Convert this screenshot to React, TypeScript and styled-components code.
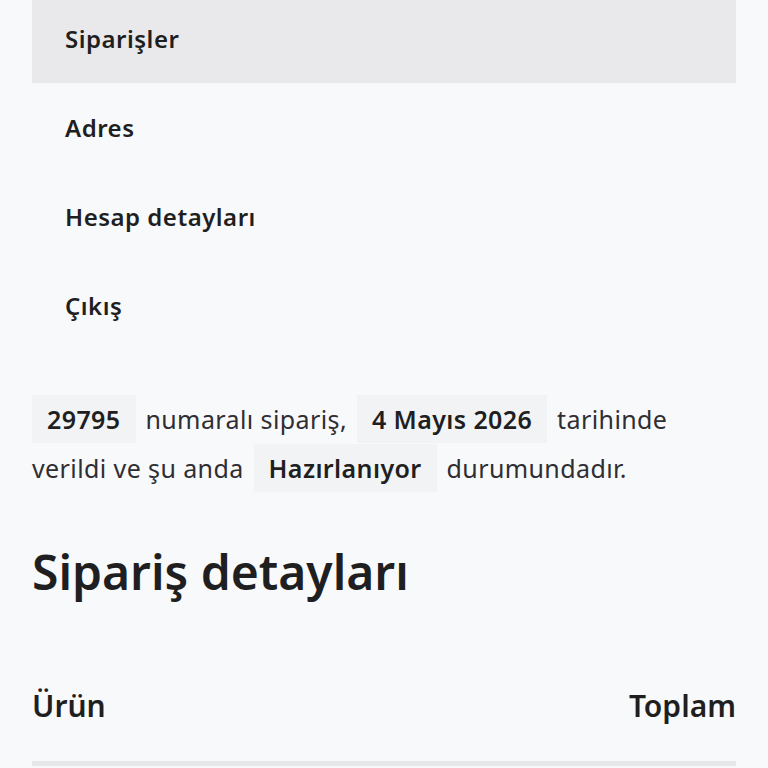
import styled, { createGlobalStyle } from 'styled-components';

const GlobalStyle = createGlobalStyle`
  * {
    box-sizing: border-box;
  }

  body {
    margin: 0;
    background-color: #f8f9fb;
    color: #1f1f22;
    font-family: 'Noto Sans', 'Lato', sans-serif;
  }
`;

const Page = styled.main`
  padding: 0 32px;
  overflow: hidden;
  height: 768px;
`;

const Nav = styled.ul`
  list-style: none;
  margin: -6px 0 0;
  padding: 0;
`;

const NavItem = styled.li<{ $active?: boolean }>`
  display: flex;
  align-items: center;
  height: 89px;
  padding-left: 33px;
  font-size: 24px;
  font-weight: 600;
  letter-spacing: 0.5px;
  color: #1f1f22;
  background-color: ${({ $active }) => ($active ? '#e9e9eb' : 'transparent')};
`;

const Summary = styled.p`
  margin: 45px 0 0;
  font-size: 25px;
  letter-spacing: 0.4px;
  line-height: 49px;
  color: #2e2e33;
`;

const Mark = styled.mark`
  display: inline-block;
  margin: 0 3px;
  padding: 0 15px;
  line-height: 48px;
  font-weight: 600;
  color: #1f1f22;
  background-color: #f2f3f5;

  &:first-child {
    margin-left: 0;
  }
`;

const Heading = styled.h2`
  margin: 50px 0 0;
  font-size: 48px;
  font-weight: 600;
  line-height: 1.2;
  color: #1f1f22;
`;

const TableHead = styled.div`
  display: flex;
  justify-content: space-between;
  align-items: center;
  margin-top: 84px;
  padding-bottom: 35px;
  border-bottom: 5px solid #e6e7e9;
  font-size: 30px;
  font-weight: 600;
  color: #1f1f22;
`;

const menu = ['Siparişler', 'Adres', 'Hesap detayları', 'Çıkış'];

const App = () => {
  return (
    <>
      <GlobalStyle />
      <Page>
        <Nav>
          {menu.map((item, i) => (
            <NavItem key={item} $active={i === 0}>
              {item}
            </NavItem>
          ))}
        </Nav>
        <Summary>
          <Mark>29795</Mark> numaralı sipariş, <Mark>4 Mayıs 2026</Mark> tarihinde
          verildi ve şu anda <Mark>Hazırlanıyor</Mark> durumundadır.
        </Summary>
        <Heading>Sipariş detayları</Heading>
        <TableHead>
          <span>Ürün</span>
          <span>Toplam</span>
        </TableHead>
      </Page>
    </>
  );
};

export default App;
